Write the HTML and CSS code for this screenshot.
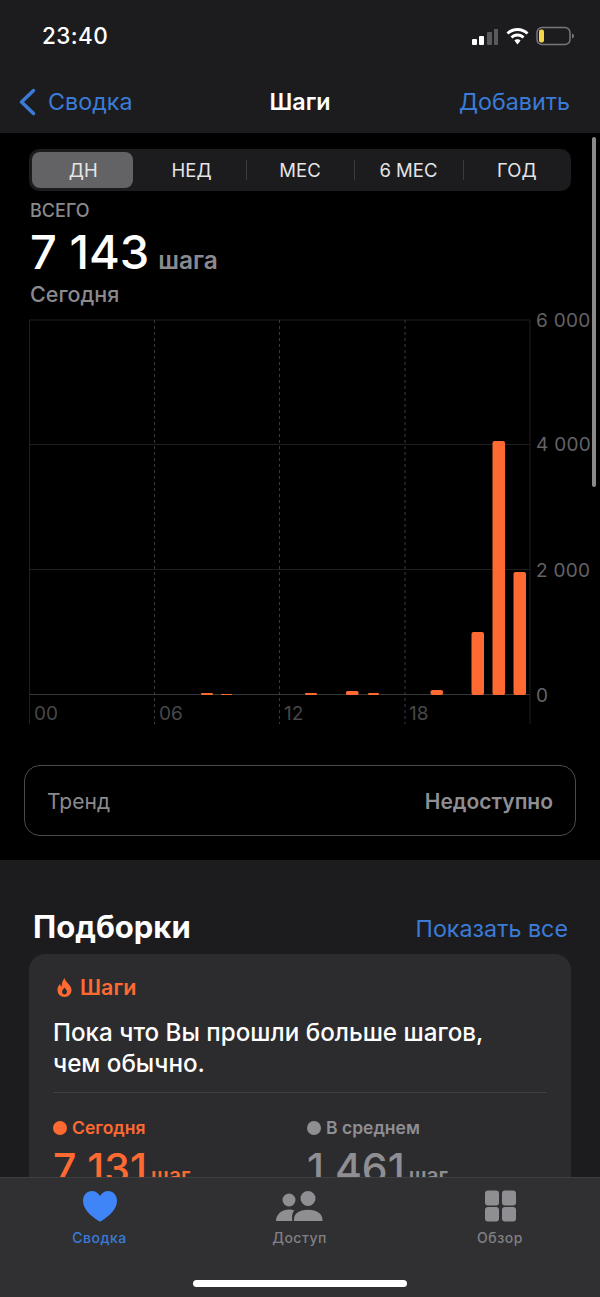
FILE: index.html
```html
<!DOCTYPE html>
<html lang="ru">
<head>
<meta charset="utf-8">
<title>Шаги</title>
<link rel="stylesheet" href="styles.css">
</head>
<body>
<div class="screen">
  <header class="top">
    <div class="status">
      <span class="time">23:40</span>
      <div class="status-icons">
        <svg class="signal" width="27" height="17" viewBox="0 0 27 17"><rect class="on" x="0" y="11" width="5" height="6" rx="1"/><rect class="on" x="7" y="8" width="5" height="9" rx="1"/><rect class="off" x="15" y="4" width="5" height="13" rx="1"/><rect class="off" x="22" y="1" width="4" height="16" rx="1"/></svg>
        <svg class="wifi" width="23" height="17" viewBox="0 0 23 17"><path d="M11.5 0C7.300 0 3.400 1.600.500 4.400L2.500 6.500C4.900 4.200 8 2.900 11.500 2.900S18.100 4.200 20.500 6.500L22.500 4.400C19.600 1.600 15.700 0 11.500 0Z"/><path d="M11.500 5.600C8.800 5.600 6.300 6.700 4.500 8.400L6.500 10.500C7.800 9.200 9.600 8.500 11.500 8.500S15.200 9.200 16.500 10.500L18.500 8.400C16.700 6.700 14.200 5.600 11.500 5.600Z"/><path d="M11.500 11.200C10.300 11.200 9.200 11.700 8.400 12.500L11.500 16.500L14.600 12.500C13.800 11.700 12.700 11.200 11.500 11.200Z"/></svg>
        <svg class="battery" width="39" height="20" viewBox="0 0 39 20"><rect class="shell" x="1" y="1.500" width="33" height="17" rx="5"/><rect class="level" x="3" y="3.500" width="5" height="13" rx="2"/><path class="nub" d="M36 7.500C37.500 8 38 9 38 10S37.500 12 36 12.500Z"/></svg>
      </div>
    </div>
    <nav class="nav">
      <a class="back"><svg width="18" height="28" viewBox="0 0 18 28"><path d="M15.500 2.500L3.500 14L15.500 25.500"/></svg><span>Сводка</span></a>
      <span class="nav-title">Шаги</span>
      <a class="nav-add">Добавить</a>
    </nav>
  </header>

  <main class="dark">
    <div class="segments">
      <span class="seg seg-active"><span class="seg-text">ДН</span></span>
      <span class="seg"><span class="seg-text">НЕД</span></span>
      <span class="seg seg-line"><span class="seg-text">МЕС</span></span>
      <span class="seg seg-line"><span class="seg-text">6 МЕС</span></span>
      <span class="seg seg-line"><span class="seg-text">ГОД</span></span>
    </div>
    <div class="summary">
      <div class="sum-label">ВСЕГО</div>
      <div class="sum-value"><span class="sum-num">7 143</span><span class="sum-unit">шага</span></div>
      <div class="sum-date">Сегодня</div>
    </div>
    <svg class="chart" width="600" height="418" viewBox="0 -10 600 418">
      <g class="grid">
        <path d="M29.500 1H530M29.500 125.500H530M29.500 250.500H530"/>
        <path class="grid-base" d="M29.500 375.500H530"/>
        <path d="M29.500 1V405M530 1V405"/>
      </g>
      <g class="grid grid-dots">
        <path d="M154.500 1V405M279.500 1V405M405 1V405"/>
      </g>
      <g class="bars">
        <rect x="471.500" y="313" width="12.500" height="63" rx="2"/>
        <rect x="492.500" y="122" width="12.500" height="254" rx="2"/>
        <rect x="513.500" y="253" width="12.500" height="123" rx="2"/>
        <rect x="201" y="374" width="12" height="2" rx="1"/>
        <rect x="221" y="375" width="11" height="1" rx="0.500"/>
        <rect x="305" y="374" width="12" height="2" rx="1"/>
        <rect x="346" y="372" width="12.500" height="4" rx="1.500"/>
        <rect x="368" y="374" width="11" height="2" rx="1"/>
        <rect x="430.500" y="371" width="12.500" height="5" rx="2"/>
      </g>
      <g class="y-labels">
        <text x="536" y="8">6 000</text>
        <text x="536" y="132">4 000</text>
        <text x="536" y="258">2 000</text>
        <text x="536" y="383">0</text>
      </g>
      <g class="x-labels">
        <text x="34" y="401">00</text>
        <text x="159" y="401">06</text>
        <text x="284" y="401">12</text>
        <text x="409" y="401">18</text>
      </g>
    </svg>
    <div class="trend">
      <span class="trend-name">Тренд</span>
      <span class="trend-value">Недоступно</span>
    </div>
  </main>

  <section class="picks">
    <div class="picks-head">
      <h2 class="picks-title">Подборки</h2>
      <a class="picks-all">Показать все</a>
    </div>
    <article class="card">
      <div class="card-tag">
        <svg width="15" height="19" viewBox="0 0 15 19"><path fill-rule="evenodd" d="M7.500 0C8 2.500 9.500 3.800 11.500 6C13.300 8 14.500 9.800 14.500 12C14.500 16 11.500 19 7.500 19S.500 16 .500 12C.500 9.500 1.500 7.500 3 6C3.300 7.500 3.900 8.300 4.700 8.800C4.700 5 5.500 2.500 7.500 0ZM7.500 9.500C6.800 10.800 5 11.800 5 13.800C5 15.300 6.100 16.400 7.500 16.400S10 15.300 10 13.800C10 11.800 8.300 10.800 7.500 9.500Z"/></svg>
        <span>Шаги</span>
      </div>
      <p class="card-text">Пока что Вы прошли больше шагов,<br>чем обычно.</p>
      <div class="compare">
        <div class="stat stat-today">
          <div class="stat-label"><i class="dot"></i>Сегодня</div>
          <div class="stat-value"><span class="stat-num">7 131</span><span class="stat-unit">шаг</span></div>
        </div>
        <div class="stat stat-avg">
          <div class="stat-label"><i class="dot"></i>В среднем</div>
          <div class="stat-value"><span class="stat-num">1 461</span><span class="stat-unit">шаг</span></div>
        </div>
      </div>
    </article>
  </section>

  <div class="scrollbar"></div>

  <footer class="tabbar">
    <div class="tabs">
      <a class="tab tab-active">
        <svg width="36" height="32" viewBox="0 0 36 32"><path d="M18 31.500C17.500 31.500 16.800 31.100 16.200 30.700C7.500 25 1 18.500 1 10.800C1 5 5 1 10 1C13.500 1 16.300 3 18 6C19.700 3 22.500 1 26 1C31 1 35 5 35 10.800C35 18.500 28.500 25 19.800 30.700C19.200 31.100 18.500 31.500 18 31.500Z"/></svg>
        <span>Сводка</span>
      </a>
      <a class="tab">
        <svg width="47" height="32" viewBox="0 0 47 32"><circle cx="13" cy="10" r="6.500"/><circle cx="32" cy="8.500" r="7.500"/><path d="M0 31C0 25 5 19.500 13 19.500C15 19.500 17 20 18.500 20.600C15.500 23.200 16 27 16.300 31Z"/><path d="M18 31C17 24 23 19.800 32 19.800S47 24 46.500 31Z"/></svg>
        <span>Доступ</span>
      </a>
      <a class="tab">
        <svg width="31" height="32" viewBox="0 0 31 32"><rect x="0" y="0.500" width="14" height="15" rx="3"/><rect x="17" y="0.500" width="14" height="15" rx="3"/><rect x="0" y="17" width="14" height="14.500" rx="3"/><rect x="17" y="17" width="14" height="14.500" rx="3"/></svg>
        <span>Обзор</span>
      </a>
    </div>
    <div class="home-bar"></div>
  </footer>
</div>
</body>
</html>
```
FILE: styles.css
```css
* { box-sizing: border-box; }
html, body { margin: 0; padding: 0; background: #1c1c1e; }
body { font-family: Inter, "Noto Sans", "Liberation Sans", sans-serif; color: #fff; }
.screen { position: relative; width: 600px; height: 1297px; overflow: hidden; background: #1c1c1e; }
a { color: inherit; text-decoration: none; }

.top { height: 133px; background: #1c1c1e; }
.status { display: flex; justify-content: space-between; align-items: center; height: 72px; padding: 0 25px 0 42px; }
.time { font-size: 22.500px; font-weight: 500; letter-spacing: 0.400px; color: #fff; padding-bottom: 2px; }
.status-icons { display: flex; align-items: center; gap: 7px; }
.signal .on { fill: #fff; }
.signal .off { fill: #5a5a5c; }
.wifi { fill: #fff; }
.battery .shell { fill: none; stroke: #77777a; stroke-width: 1.500; }
.battery .level { fill: #f4d648; }
.battery .nub { fill: #77777a; }

.nav { display: grid; grid-template-columns: 1fr auto 1fr; align-items: center; height: 61px; padding: 0 30px 2px 18px; font-size: 23.300px; color: #3b7bd8; }
.back { display: flex; align-items: center; gap: 12px; }
.back svg { fill: none; stroke: #3b7bd8; stroke-width: 3.500; stroke-linecap: round; stroke-linejoin: round; }
.nav-title { font-weight: 600; color: #fff; margin-left: 12px; }
.nav-add { justify-self: end; }

.dark { height: 727px; background: #000; padding-top: 16px; }
.segments { display: flex; align-items: center; height: 42px; margin: 0 29px; background: #1c1c1e; border-radius: 10px; }
.seg { position: relative; flex: 1; display: flex; align-items: center; justify-content: center; height: 42px; font-size: 18.500px; color: #e5e5e7; }
.seg-text { position: relative; }
.seg-active::before { content: ""; position: absolute; left: 3px; right: 4px; top: 3px; bottom: 3px; background: #636366; border-radius: 8px; }
.seg-line::before { content: ""; position: absolute; left: 0; top: 11px; height: 20px; width: 1px; background: #3a3a3c; }

.summary { padding: 9px 29px 0 30px; height: 118px; }
.sum-label { font-size: 18px; line-height: 22px; font-weight: 500; color: #8a8a8e; }
.sum-value { display: flex; align-items: baseline; gap: 9px; height: 57px; line-height: 60px; }
.sum-num { font-size: 47px; font-weight: 500; color: #fff; }
.sum-unit { font-size: 24.500px; font-weight: 600; color: #8a8a8e; }
.sum-date { font-size: 21.500px; line-height: 26px; font-weight: 500; color: #8a8a8e; padding-top: 2px; }

.chart { display: block; }
.grid path { stroke: #1f1f21; stroke-width: 1; fill: none; }
.grid .grid-base { stroke: #38383a; }
.grid-dots path { stroke: #3a3a3c; stroke-dasharray: 3 3; }
.bars rect { fill: #ff6a33; }
.y-labels text { font-size: 19px; fill: #636366; letter-spacing: 0.300px; }
.x-labels text { font-size: 19px; fill: #48484a; }

.trend { display: flex; justify-content: space-between; align-items: center; height: 71px; margin: 38px 24px 0; padding: 2px 22px 0; border: 1.500px solid #4a4a4c; border-radius: 16px; font-size: 21px; }
.trend-name { color: #8a8a8e; }
.trend-value { color: #8e8e93; font-weight: 600; }

.picks { padding: 0 29px; }
.picks-head { display: flex; justify-content: space-between; align-items: center; height: 94px; padding: 38px 3px 0 4px; }
.picks-title { margin: 0; font-size: 31px; font-weight: 700; color: #fff; }
.picks-all { font-size: 23.300px; color: #3b7bd8; padding-top: 4px; }

.card { background: #2c2c2e; border-radius: 16px; padding: 20px 24px 0; height: 300px; }
.card-tag { display: flex; align-items: center; gap: 8px; padding-left: 4px; font-size: 21.500px; font-weight: 600; color: #ff6a33; }
.card-tag svg { fill: #ff6a33; }
.card-text { margin: 17px 0 0; padding-bottom: 13px; font-size: 24.200px; line-height: 31px; font-weight: 500; color: #fff; border-bottom: 1px solid #3f3f41; }
.compare { display: flex; padding-top: 23px; }
.stat { flex: 0 0 254px; }
.stat-label { display: flex; align-items: center; gap: 5px; font-size: 17.500px; font-weight: 600; line-height: 24px; }
.dot { display: block; width: 14px; height: 14px; border-radius: 50%; background: currentColor; }
.stat-value { display: flex; align-items: baseline; gap: 4px; line-height: 46px; margin-top: 5px; }
.stat-num { font-size: 41px; font-weight: 500; }
.stat-unit { font-size: 21px; font-weight: 600; }
.stat-today { color: #ff6a33; }
.stat-avg { color: #8e8e93; }

.scrollbar { position: absolute; right: 4px; top: 137px; width: 4px; height: 350px; border-radius: 2px; background: #8a8a8c; }

.tabbar { position: absolute; left: 0; right: 0; bottom: 0; height: 120px; background: #303032; border-top: 1px solid #3f3f41; }
.tabs { display: grid; grid-template-columns: 199px 201px 200px; padding-top: 12px; }
.tab { display: flex; flex-direction: column; align-items: center; gap: 7px; color: #808084; }
.tab svg { fill: #8e8e93; display: block; }
.tab span { font-size: 14px; font-weight: 500; line-height: 18px; letter-spacing: 0.500px; }
.tab-active { color: #3b7bd8; }
.tab-active svg { fill: #3f85f7; }
.home-bar { position: absolute; left: 193px; bottom: 10px; width: 214px; height: 7px; border-radius: 4px; background: #fff; }
```
